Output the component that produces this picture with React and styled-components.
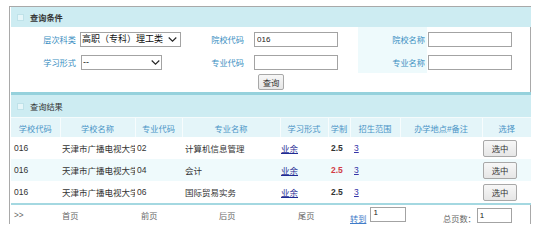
import React from "react";
import styled, { createGlobalStyle } from "styled-components";

const GlobalStyle = createGlobalStyle`
  body {
    margin: 0;
    background: #fff;
    font-family: "Liberation Sans", "Noto Sans CJK SC", sans-serif;
    font-size: 8.2px;
    color: #333;
  }
`;

const Frame = styled.div`
  margin: 6px 0 0 9px;
  width: 522px;
  height: 218px;
  border: 1px solid #a9a9a9;
  border-bottom: 0;
  padding-left: 1px;
  box-sizing: border-box;
`;

const Panel = styled.div`
  width: 520px;
`;

const Bar = styled.div`
  display: flex;
  align-items: center;
  height: ${(p) => p.h}px;
  background: #cdecf2;
  padding-left: 6px;
  gap: 6px;
  font-weight: ${(p) => (p.bold ? 700 : 400)};
  color: #333;
  box-sizing: border-box;
  ${(p) => p.topLine && "border-top: 3px solid #95d1dc;"}
`;

const Square = styled.span`
  width: 5px;
  height: 5px;
  background: #e6f6f9;
  border: 1px solid #bfe2e9;
`;

const Form = styled.div`
  display: grid;
  grid-template-columns: 67px 112px 62px 106px 69px 104px;
  grid-template-rows: 24px 22px 19px;
`;

const Label = styled.div`
  display: flex;
  align-items: center;
  justify-content: flex-end;
  padding-right: ${(p) => p.pr || 2}px;
  color: #3b8fc2;
  background: ${(p) => (p.tint ? "#eefafc" : "transparent")};
`;

const Cell = styled.div`
  display: flex;
  align-items: center;
  padding-left: ${(p) => p.pl || 0}px;
`;

const SelectWrap = styled.div`
  position: relative;
  width: ${(p) => p.w}px;
  height: 15px;
`;

const Select = styled.select`
  appearance: none;
  width: 100%;
  height: 100%;
  border: 1px solid #a3a3a3;
  background: #fff;
  font-family: "Liberation Sans", "Noto Sans CJK SC", sans-serif;
  font-size: 9px;
  color: #111;
  padding: 0 1px;
  margin: 0;
  box-sizing: border-box;
  outline: none;
`;

const Chevron = styled.svg`
  position: absolute;
  right: ${(p) => p.r}px;
  top: 5px;
  pointer-events: none;
`;

const Input = styled.input`
  width: ${(p) => p.w}px;
  height: 15px;
  border: 1px solid #a3a3a3;
  box-sizing: border-box;
  font-family: "Liberation Sans", sans-serif;
  font-size: 8px;
  color: #222;
  padding: ${(p) => (p.top ? "0 2px 4px" : "0 2px")};
  margin: 0;
  outline: none;
`;

const ButtonRow = styled.div`
  grid-column: 1 / -1;
  display: flex;
  justify-content: center;
  align-items: flex-start;
  padding-top: 1px;
`;

const Btn = styled.button`
  width: ${(p) => p.w}px;
  height: ${(p) => p.h}px;
  padding: 0;
  border: 1px solid #a8a8a8;
  border-radius: 2px;
  background: linear-gradient(#f7f7f7, #e6e6e6);
  font-family: "Noto Sans CJK SC", sans-serif;
  font-size: 8.4px;
  color: #333;
`;

const Table = styled.table`
  width: 520px;
  border-collapse: collapse;
  table-layout: fixed;
  border-bottom: 2px solid #a4d8e1;
  font-size: 8.5px;
`;

const Th = styled.th`
  height: 19px;
  padding: 0;
  background: #e4f5f9;
  border-top: 1px solid #f4fbfc;
  border-left: ${(p) => (p.first ? "0" : "1px solid #f7fcfd")};
  font-weight: 400;
  font-size: 8.2px;
  color: #4a94c6;
  text-align: center;
`;

const Tr = styled.tr`
  background: ${(p) => (p.alt ? "#effafc" : "#fff")};
`;

const Td = styled.td`
  height: 22px;
  padding: 0 0 0 ${(p) => p.pl || 2}px;
  white-space: nowrap;
  overflow: hidden;
  text-overflow: clip;
`;

const Link = styled.a`
  color: ${(p) => p.c || "#1f2b94"};
  text-decoration: underline;
  font-weight: ${(p) => (p.bold ? 700 : 400)};
`;

const Years = styled.span`
  font-weight: 700;
  color: ${(p) => (p.red ? "#d23a45" : "#333")};
`;

const Footer = styled.div`
  display: flex;
  height: 20px;
`;

const FootCell = styled.div`
  width: ${(p) => p.w}px;
  display: flex;
  align-items: ${(p) => (p.top ? "flex-start" : "center")};
  padding-left: ${(p) => p.pl || 2}px;
  padding-top: ${(p) => (p.top ? "2px" : "0")};
  gap: ${(p) => p.gap || 0}px;
  color: #666;
  box-sizing: border-box;
`;

const FootText = styled.span`
  margin-top: ${(p) => p.mt || 0}px;
`;

const cols = [49, 75, 47, 98, 48, 22, 50, 82, 49];
const heads = ["学校代码", "学校名称", "专业代码", "专业名称", "学习形式", "学制", "招生范围", "办学地点#备注", "选择"];
const rows = [
  { code: "02", name: "计算机信息管理" },
  { code: "04", name: "会计", red: true },
  { code: "06", name: "国际贸易实务" },
];

function Arrow({ r }) {
  return (
    <Chevron r={r} width="9" height="5" viewBox="0 0 9 5">
      <path d="M0.7 0.5 L4.5 4.2 L8.3 0.5" fill="none" stroke="#222" strokeWidth="1.1" />
    </Chevron>
  );
}

export default function App() {
  return (
    <>
      <GlobalStyle />
      <Frame>
        <Panel>
          <Bar h={20} bold>
            <Square />
            查询条件
          </Bar>
          <Form>
            <Label>层次科类</Label>
            <Cell pl={2}>
              <SelectWrap w={101}>
                <Select defaultValue="a">
                  <option value="a">高职（专科）理工类</option>
                </Select>
                <Arrow r={4} />
              </SelectWrap>
            </Cell>
            <Label pr={8}>院校代码</Label>
            <Cell pl={2}>
              <Input w={84} defaultValue="016" />
            </Cell>
            <Label tint>院校名称</Label>
            <Cell pl={1}>
              <Input w={84} />
            </Cell>

            <Label>学习形式</Label>
            <Cell pl={3}>
              <SelectWrap w={81}>
                <Select defaultValue="b">
                  <option value="b">--</option>
                </Select>
                <Arrow r={2} />
              </SelectWrap>
            </Cell>
            <Label pr={8}>专业代码</Label>
            <Cell pl={2}>
              <Input w={84} />
            </Cell>
            <Label tint>专业名称</Label>
            <Cell pl={1}>
              <Input w={84} />
            </Cell>

            <ButtonRow>
              <Btn w={26} h={16}>查询</Btn>
            </ButtonRow>
          </Form>

          <Bar h={25} topLine>
            <Square />
            查询结果
          </Bar>
          <Table>
            <colgroup>
              {cols.map((w, i) => (
                <col key={i} style={{ width: w }} />
              ))}
            </colgroup>
            <thead>
              <tr>
                {heads.map((h, i) => (
                  <Th key={h} first={i === 0}>{h}</Th>
                ))}
              </tr>
            </thead>
            <tbody>
              {rows.map((r, i) => (
                <Tr key={r.code} alt={i === 1}>
                  <Td pl={3}>016</Td>
                  <Td>天津市广播电视大学</Td>
                  <Td>{r.code}</Td>
                  <Td pl={3}>{r.name}</Td>
                  <Td pl={1}>
                    <Link href="#">业余</Link>
                  </Td>
                  <Td pl={3}>
                    <Years red={r.red}>2.5</Years>
                  </Td>
                  <Td pl={4}>
                    <Link href="#" c="#3535a8">3</Link>
                  </Td>
                  <Td />
                  <Td pl={1}>
                    <Btn w={34} h={17}>选中</Btn>
                  </Td>
                </Tr>
              ))}
            </tbody>
          </Table>
          <Footer>
            <FootCell w={49} pl={3}>&gt;&gt;</FootCell>
            <FootCell w={79}>首页</FootCell>
            <FootCell w={78}>前页</FootCell>
            <FootCell w={79}>后页</FootCell>
            <FootCell w={52}>尾页</FootCell>
            <FootCell w={93} top gap={4}>
              <FootText mt={5}>
                <Link href="#" c="#3f7cc9">转到</Link>
              </FootText>
              <Input w={36} defaultValue="1" top />
            </FootCell>
            <FootCell w={90} top gap={1}>
              <FootText mt={5}>总页数：</FootText>
              <Input w={35} defaultValue="1" style={{ marginTop: 1 }} />
            </FootCell>
          </Footer>
        </Panel>
      </Frame>
    </>
  );
}
